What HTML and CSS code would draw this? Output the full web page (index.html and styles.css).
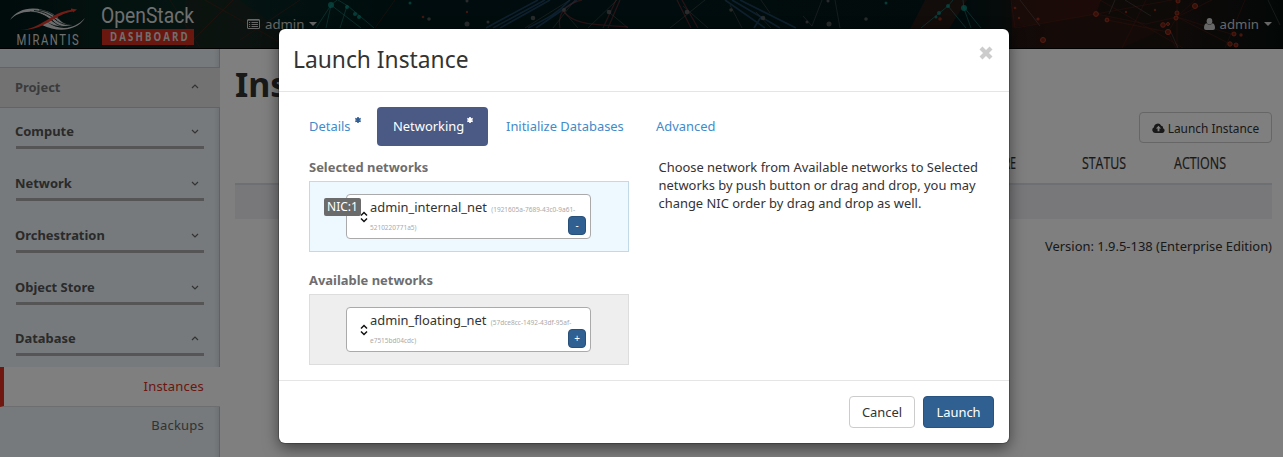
FILE: index.html
```html
<!DOCTYPE html>
<html lang="en">
<head>
<meta charset="utf-8">
<title>Instances - OpenStack Dashboard</title>
<link rel="stylesheet" href="styles.css">
</head>
<body>
<header class="topbar">
  <svg class="network-art" viewBox="0 0 1283 48" preserveAspectRatio="none" aria-hidden="true">
    <defs>
      <linearGradient id="haze" x1="0" x2="1"><stop offset="0" stop-color="#001616"/><stop offset=".08" stop-color="#08241f"/><stop offset=".17" stop-color="#0b2b25"/><stop offset=".3" stop-color="#001a1b"/><stop offset=".75" stop-color="#031719"/><stop offset=".82" stop-color="#1e1512"/><stop offset=".92" stop-color="#1c1411"/><stop offset="1" stop-color="#06100f"/></linearGradient>
    </defs>
    <rect width="1283" height="48" fill="url(#haze)"/>
    <path d="M185 0h55l65 48h-120z" fill="#4b1b0d" opacity=".2"/>
    <path d="M925 0h42l-18 29h-39zM1011 0h90l-5 14-84 14z" fill="#751a0d" opacity=".3"/>
    <path d="M1012 28l84-14 66 16-40 18h-110z" fill="#5a1a0c" opacity=".2"/>
    <g fill="none" stroke="#6d2114" opacity=".4">
      <path d="M170 0l30 48M185 48l48-48M205 0l85 48M240 40l60-40M375 28l20-28M1011 0l4 28 81-14 50 10 31-7 35-17M1096 14l76-14M1107 20l61 12 9-15M1146 0l-24 48M1177 17l57 18M1168 32l8 16M1177 0v48M1195 0l-18 17 53 27M1245 0l-20 48M1100 0l83 48"/>
    </g>
    <g fill="none" stroke="#1c837a" opacity=".6">
      <path d="M316 28L331 5l6-5M331 5l-5 23M331 5l30 23M338 0l10 6 26 22M340 28l7-22M921 28l27-22 18 22M948 6l5-6M963 6l8 22M963 6l18 22M964 9l-1-9"/>
    </g>
    <g fill="none" stroke="#87817b" opacity=".32">
      <path d="M525 28l45-28M553 28l22-28M565 13l13 15M588 28l29-28M610 13l18 15M670 28l35-28M683 6l25 22M730 5l12 23M756 12l15 16M770 13l-14-20M803 16l9 10 10-26M835 0l5 28M1020 0l20 26M1109 14l6-14M1125 0l26 16M1170 30l8 18M1268 0l12 25"/>
    </g>
    <g fill="none" stroke="#315f91" stroke-width="1.7" opacity=".55">
      <path d="M486 28l52-28M493 28l52-28M500 28l50-28M528 28c20-10 30-15 42-28M536 28l41-28M725 0l40 28M732 0l48 28M740 0l56 28M761 17l-7 11"/>
    </g>
    <g fill="none" stroke="#9b3239" stroke-width="1.3" opacity=".5">
      <path d="M603 28l13-28M608 28l12-28M677 0l14 28M682 0l16 28M560 28c-4-18 12-26 22-28M564 12c12 14 32 12 64 15"/>
    </g>
    <g fill="#0f8f83" opacity=".8"><circle cx="331" cy="5" r="3"/><circle cx="347" cy="7" r="2"/><circle cx="355" cy="14" r="2"/><circle cx="359" cy="17" r="2"/><circle cx="410" cy="3" r="1.5"/><circle cx="886" cy="3" r="1.500"/><circle cx="948" cy="6" r="2"/><circle cx="939" cy="13" r="2"/><circle cx="936" cy="17" r="1.500"/><circle cx="964" cy="8" r="3"/></g>
    <g fill="#a5351f" opacity=".8"><circle cx="423" cy="17" r="1.300"/><circle cx="467" cy="12" r="1.200"/><circle cx="940" cy="19" r="1.800"/><circle cx="1015" cy="8" r="1.300"/><circle cx="1019" cy="18" r="1.200"/><circle cx="1038" cy="19" r="1.600"/><circle cx="1126" cy="12" r="1.200"/><circle cx="1155" cy="10" r="1.200"/><circle cx="1241" cy="35" r="1.700"/></g>
    <g fill="#6a2114" stroke="#a5351f"><circle cx="1096" cy="14" r="2.400"/><circle cx="1107" cy="20" r="1.900"/><circle cx="1043" cy="40" r="2.500"/><circle cx="1177" cy="13" r="2"/><circle cx="1176" cy="18" r="2"/><circle cx="1178" cy="1" r="2"/><circle cx="1195" cy="6" r="2.500"/><circle cx="1163" cy="25" r="2.300"/><circle cx="1168" cy="32" r="2.600"/><circle cx="1168" cy="24" r="1.500"/><circle cx="1234" cy="34" r="2"/><circle cx="1230" cy="44" r="2.200"/><circle cx="1236" cy="45" r="2"/></g>
    <g fill="#656565" opacity=".8"><circle cx="429" cy="19" r="1.800"/><circle cx="467" cy="24" r="2.500"/><circle cx="467" cy="1" r="1.500"/><circle cx="488" cy="22" r="1.500"/><circle cx="533" cy="18" r="2.300"/><circle cx="564" cy="10" r="2"/><circle cx="609" cy="12" r="2.300"/><circle cx="687" cy="12" r="2.300"/><circle cx="731" cy="10" r="1.800"/><circle cx="763" cy="18" r="2.300"/><circle cx="807" cy="22" r="1.500"/><circle cx="829" cy="24" r="2.500"/><circle cx="828" cy="1" r="1.500"/><circle cx="866" cy="19" r="1.800"/></g>
  </svg>
  <div class="topbar-content">
    <svg class="brand" width="200" height="48" viewBox="0 0 200 48" role="img" aria-label="Mirantis OpenStack Dashboard">
      <g fill="#d8d8d8">
        <path d="M10 20c8-13 27-15 43-6l8 8-6 1C40 8 20 9 10 20z"/>
        <path d="M85 18c-8 13-27 15-43 7l5-3c12 9 27 8 38-4z"/>
        <path d="M47 22l10-6c2 5 8 9 15 9-10 3-18 1-25-3z"/>
      </g>
      <path d="M30 12c11 0 17 6 24 10M34 10.500c11 1 17 6 23 10M39 10c9 1 14 5 20 9M52 20c4 5 10 7 16 7M54 18c4 5 11 7 17 7" fill="none" stroke="#07201f" stroke-width=".8"/>
      <path d="M20 30c22-1 31-18 51-20V8.500l6 1-4 3v-1C54 14 45 31 20 30z" fill="#e33a2d"/>
      <g fill="#dedede">
        <text class="logo-small" transform="translate(16.500 44.500) scale(.75 1)" x="0" y="0" textLength="83">MIRANTIS</text>
        <text class="logo-open" x="101" y="23" textLength="93" lengthAdjust="spacingAndGlyphs">OpenStack</text>
      </g>
      <path d="M102 29h92v16h-92z" fill="#d4301e"/>
      <text class="logo-dash" transform="translate(110 41) scale(.8 1)" x="0" y="0" textLength="97" fill="#dedede">DASHBOARD</text>
    </svg>
    <div class="project-picker">
      <svg width="13" height="10" viewBox="0 0 13 10"><path d="M1 .5h11q.5 0 .5.5v8q0 .5-.5.5H1Q.5 9.500.5 9V1Q.5.5 1 .5z" fill="none" stroke="#cecece"/><path d="M1 1.200h11M2 3.500h1.200M4.500 3.500h6.500M2 5.500h1.200M4.500 5.500h6.500M2 7.500h1.200M4.500 7.500h6.500" stroke="#cecece"/></svg>
      <span>admin</span><i class="caret"></i>
    </div>
    <div class="user-menu">
      <svg width="11" height="12" viewBox="0 0 11 12" fill="#cecece"><ellipse cx="5.500" cy="3.200" rx="2.800" ry="3.200"/><path d="M2.500 5.300Q5.500 8.300 8.500 5.300Q11 6 11 10Q11 12 9 12H2Q0 12 0 10Q0 6 2.500 5.300z"/></svg>
      <span>admin</span><i class="caret"></i>
    </div>
  </div>
</header>
<div class="workspace">
  <nav class="sidebar">
    <div class="panel-head"><span>Project</span><svg class="chevron" viewBox="0 0 8 5"><path d="M1 4l3-3 3 3"/></svg></div>
    <div class="group"><span>Compute</span><svg class="chevron" viewBox="0 0 8 5"><path d="M1 1l3 3 3-3"/></svg></div>
    <div class="group"><span>Network</span><svg class="chevron" viewBox="0 0 8 5"><path d="M1 1l3 3 3-3"/></svg></div>
    <div class="group"><span>Orchestration</span><svg class="chevron" viewBox="0 0 8 5"><path d="M1 1l3 3 3-3"/></svg></div>
    <div class="group"><span>Object Store</span><svg class="chevron" viewBox="0 0 8 5"><path d="M1 1l3 3 3-3"/></svg></div>
    <div class="group open"><span>Database</span><svg class="chevron" viewBox="0 0 8 5"><path d="M1 4l3-3 3 3"/></svg></div>
    <a class="entry active">Instances</a>
    <a class="entry">Backups</a>
  </nav>
  <main class="main">
    <h1>Instances</h1>
    <div class="toolbar"><button class="page-launch"><svg width="13" height="10" viewBox="0 0 13 10"><path d="M3 10a3 3 0 0 1-1-5.700A3.800 3.800 0 0 1 9.200 2.700 2.100 2.100 0 0 1 11 5.200 2.500 2.500 0 0 1 10.500 10z" fill="#333"/><path d="M6.500 2.800L3.900 5.500h1.700v2.700h1.800V5.500h1.700z" fill="#fff"/></svg>Launch Instance</button></div>
    <div class="columns">
      <svg class="column" width="60" height="24"><text x="0" y="16" textLength="57" lengthAdjust="spacingAndGlyphs">DATASTORE</text></svg>
      <svg class="column" width="45" height="24"><text x="0" y="16" textLength="44" lengthAdjust="spacingAndGlyphs">STATUS</text></svg>
      <svg class="column" width="53" height="24"><text x="0" y="16" textLength="52" lengthAdjust="spacingAndGlyphs">ACTIONS</text></svg>
    </div>
    <div class="empty-row"></div>
    <p class="version">Version: 1.9.5-138 (Enterprise Edition)</p>
  </main>
</div>
<div class="backdrop">
  <section class="modal" role="dialog" aria-label="Launch Instance">
    <div class="modal-head">
      <h2>Launch Instance</h2>
      <svg class="close" width="14" height="14" viewBox="0 0 14 14"><path d="M2 2l10 10M12 2L2 12" stroke="#ccc" stroke-width="4.200"/></svg>
    </div>
    <div class="modal-body">
      <div class="tabs">
        <a class="tab details">Details<svg class="star" viewBox="0 0 6 6"><path d="M3 0v6M.3 1.500l5.400 3M5.700 1.500l-5.400 3"/></svg></a>
        <a class="tab selected">Networking<svg class="star" viewBox="0 0 6 6"><path d="M3 0v6M.3 1.500l5.400 3M5.700 1.500l-5.400 3"/></svg></a>
        <a class="tab init">Initialize Databases</a>
        <a class="tab">Advanced</a>
      </div>
      <div class="content">
        <div class="networks">
          <h3>Selected networks</h3>
          <div class="dropzone chosen">
            <div class="network">
              <svg class="sort" viewBox="0 0 8 12"><path d="M1 4.500l3-3 3 3M1 7.500l3 3 3-3"/></svg>
              <div class="net-text">admin_internal_net <small>(1921605a-7689-43c0-9a61-5210220771a5)</small></div>
              <span class="nic">NIC:1</span>
              <button class="toggle">-</button>
            </div>
          </div>
          <h3 class="second">Available networks</h3>
          <div class="dropzone">
            <div class="network">
              <svg class="sort" viewBox="0 0 8 12"><path d="M1 4.500l3-3 3 3M1 7.500l3 3 3-3"/></svg>
              <div class="net-text">admin_floating_net <small>(57dce8cc-1492-43df-95af-e7515bd04cdc)</small></div>
              <button class="toggle">+</button>
            </div>
          </div>
        </div>
        <p class="help">Choose network from Available networks to Selected networks by push button or drag and drop, you may change NIC order by drag and drop as well.</p>
      </div>
    </div>
    <footer class="modal-foot"><button class="btn cancel">Cancel</button><button class="btn primary">Launch</button></footer>
  </section>
</div>
</body>
</html>
```
FILE: styles.css
```css
* { box-sizing: border-box; }
html, body { height: 100%; }
body { margin: 0; overflow: hidden; background: #fff; color: #333; font: 12.93px/18px "Noto Sans", sans-serif; }
h1, h2, h3, p { margin: 0; }
button { font: inherit; padding: 0; }
svg { flex: none; }
.topbar { position: relative; height: 49px; border-bottom: 1px solid #000; background: #001a1a; }
.network-art { position: absolute; inset: 0; width: 100%; height: 48px; }
.topbar-content { position: relative; display: flex; height: 48px; align-items: center; color: #cecece; padding-right: 11px; }
.logo-small { font: 15px "Roboto", sans-serif; }
.logo-open { font: 21.5px "Roboto", sans-serif; }
.logo-dash { font: bold 12px "Open Sans", sans-serif; }
.project-picker, .user-menu { display: flex; align-items: center; gap: 5px; font-size: 13.2px; }
.project-picker { margin-left: 47px; }
.user-menu { margin-left: auto; }
.caret { border: 4px solid transparent; border-top-color: #cecece; border-bottom: 0; }
.workspace { display: flex; height: 408px; }
.sidebar { width: 220px; flex: none; padding-top: 18px; background: linear-gradient(to right, #ecf4f8 214px, #dce4e8 219px, #bfc5c8 219px); }
.panel-head { height: 41px; border: solid #c2c6c8; border-width: 1px 0; background: #e4e4e4; color: #777; padding: 0 21px 2px 15px; }
.panel-head, .group { display: flex; align-items: center; justify-content: space-between; font-weight: 700; }
.group { margin: 0 16px; height: 52px; padding: 0 5px 6px 0; color: #555; background: linear-gradient(#aaa, #aaa) 0 38px / 100% 3px no-repeat; }
.group span { margin-left: -1px; }
.group.open { height: 51px; background-position-y: 37px; padding-bottom: 7px; }
.chevron { width: 8px; height: 5px; fill: none; stroke: #666; stroke-width: 1.2; }
.entry { display: flex; height: 39px; align-items: center; justify-content: flex-end; padding: 0 16px 3px 0; color: #666; font-size: 13px; letter-spacing: .22px; }
.entry.active { height: 40px; border-left: 4px solid #e1301e; border-bottom: 1px solid #d8dde0; background: #fff; color: #d82d20; padding-bottom: 1px; }
.main { flex: 1; padding: 17px 11px 0 15px; }
h1 { font-size: 34px; line-height: 37px; height: 46px; }
.toolbar { display: flex; justify-content: flex-end; }
.page-launch { display: flex; align-items: center; justify-content: center; gap: 3px; width: 133px; height: 31px; border: 1px solid #ccc; border-radius: 4px; background: #fff; color: #333; font-size: 11.9px; }
.columns { display: flex; justify-content: flex-end; height: 40px; padding: 10px 45px 0 0; }
.column { overflow: visible; fill: #333; stroke: #333; stroke-width: .2px; font: 17px "Open Sans", sans-serif; }
.column:nth-child(2) { margin: 0 47px 0 63px; }
.empty-row { height: 36px; border-top: 2px solid #dbe1e6; background: #f0f1f4; }
.version { text-align: right; margin-top: 18px; }
.backdrop { position: absolute; inset: 0; background: rgba(0,0,0,.5); display: flex; justify-content: center; align-items: flex-start; padding: 29px 0 0 5px; }
.modal { width: 730px; height: 414px; border-radius: 6px; background: #fff; box-shadow: 0 5px 15px rgba(0,0,0,.5), 0 0 0 1px rgba(0,0,0,.2); }
.modal-head { display: flex; justify-content: space-between; height: 63px; padding: 15px 16px 0 14px; border-bottom: 1px solid #e5e5e5; }
h2 { font-size: 22.8px; line-height: 31px; font-weight: 400; }
.close { margin-top: 2px; }
.modal-body { height: 288px; padding: 15px 15px 0; }
.tabs { display: flex; height: 39px; gap: 2px; }
.tab { display: flex; align-items: center; color: #428bca; padding: 0 16px 2px; border-radius: 4px; }
.star { width: 6px; height: 6px; margin: -11px 0 0 4px; fill: none; stroke: #2f5e94; stroke-width: 1.6; }
.tab.details { width: 81px; padding-right: 0; padding-left: 15px; }
.tab.selected { width: 111px; background: #4b5a84; color: #fff; padding-right: 0; }
.tab.selected .star { stroke: #fff; margin-left: 3px; }
.tab.init { width: 148px; padding-right: 0; }
.content { display: flex; gap: 29.500px; padding: 12px 0 0 15px; }
.networks { width: 320px; }
h3 { font-size: 12.95px; line-height: 18px; color: #6e6e6e; margin-bottom: 5px; }
.second { margin-top: 19px; }
.dropzone { height: 71px; border: 1px solid #ddd; background: #eee; padding: 12px 36px; }
.dropzone.chosen { border-color: #c2dae6; background: #edf8ff; }
.network { position: relative; width: 245px; height: 45px; border: 1px solid #aaa; border-radius: 4px; background: #fff; display: flex; padding: 3px 13px 0 12px; }
.sort { width: 8px; height: 12px; margin: 13px 3px 0 0; fill: none; stroke: #111; stroke-width: 1.5; position: relative; left: .5px; }
.net-text { flex: 1; line-height: 18px; font-size: 12.9px; }
small { font-size: 6.5px; line-height: 1; color: #aaa; margin-left: 1px; }
.nic { position: absolute; left: -23px; top: 3px; width: 37px; height: 18px; border-radius: 2px; background: #6b6b6b; color: #fff; font-size: 12px; line-height: 17px; text-align: center; }
.toggle { position: absolute; left: 221px; top: 21px; width: 18px; height: 19px; border: 1px solid #285078; border-radius: 4px; background: #305f92; color: #fff; font-size: 10px; line-height: 15px; }
.help { width: 330px; }
.modal-foot { height: 63px; border-top: 1px solid #e5e5e5; display: flex; justify-content: flex-end; gap: 8px; padding: 15px 15px 0; }
.btn { height: 32px; border-radius: 4px; }
.cancel { width: 66px; border: 1px solid #ccc; background: #fff; color: #333; }
.primary { width: 71px; border: 1px solid #28527f; background: #305f92; color: #fff; }
```
